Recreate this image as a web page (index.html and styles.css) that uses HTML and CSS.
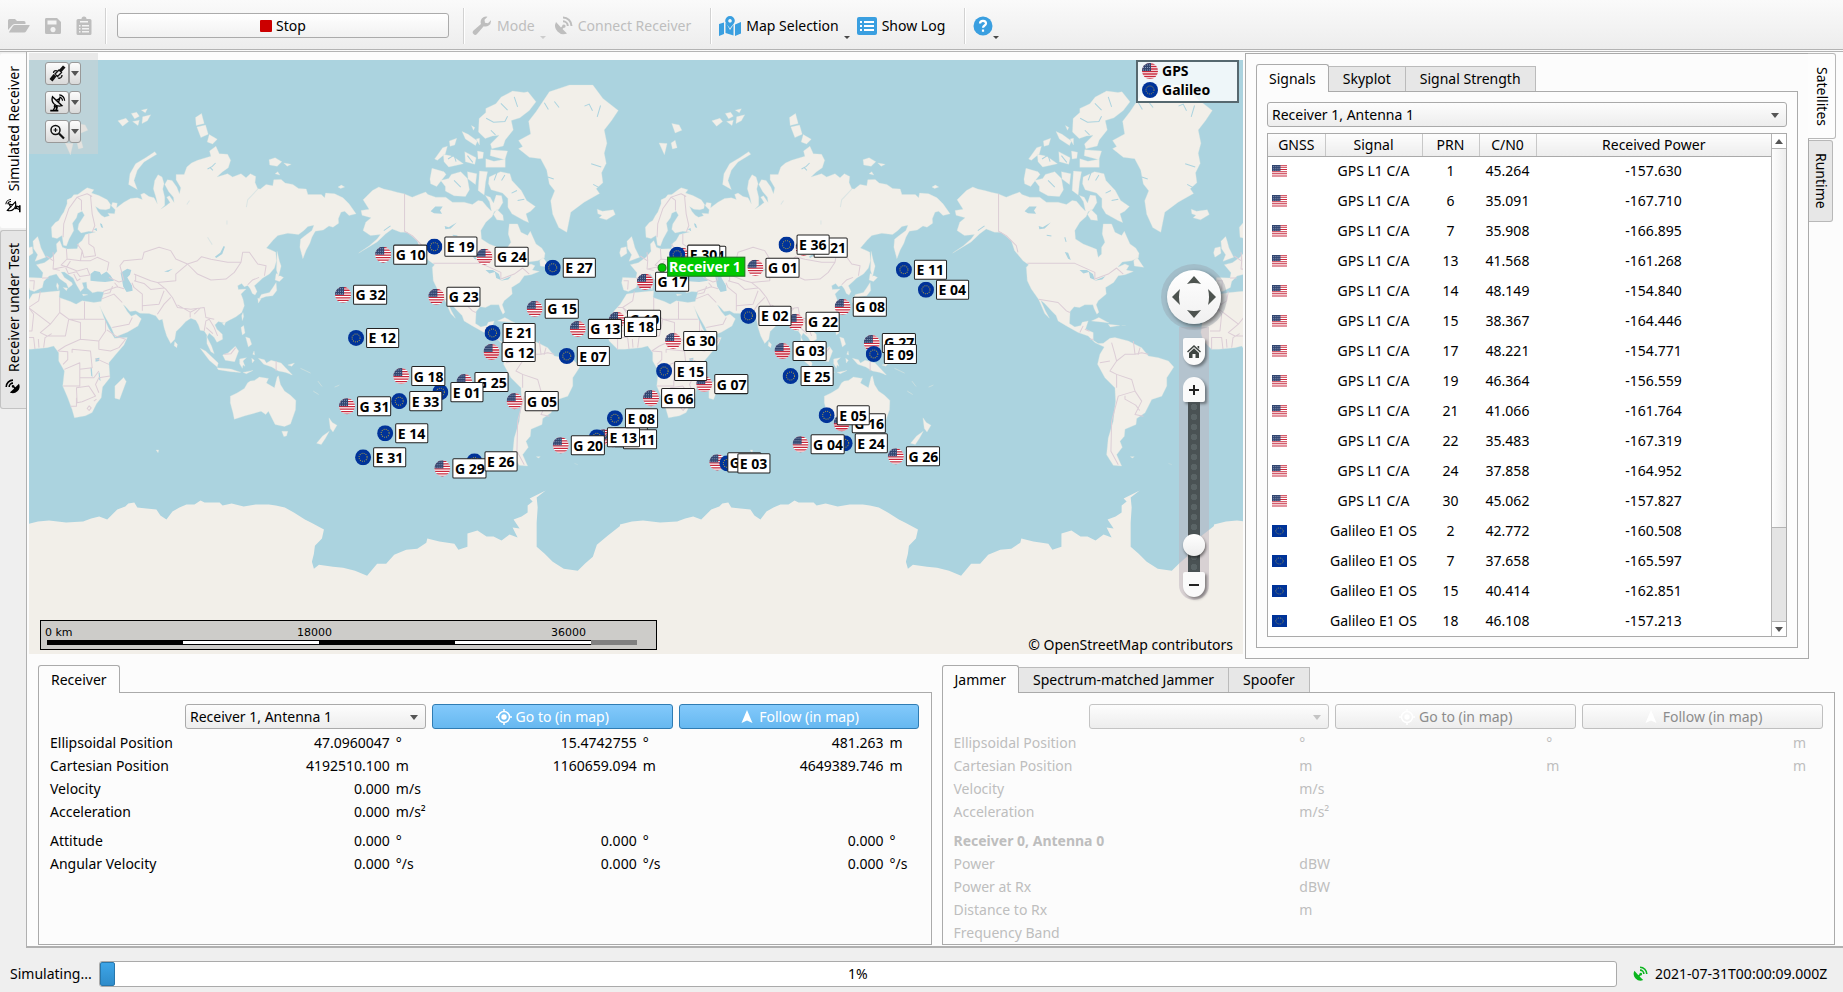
FILE: index.html
```html
<!DOCTYPE html>
<html lang="en">
<head>
<meta charset="utf-8">
<title>GNSS Simulator</title>
<link rel="stylesheet" href="styles.css">
</head>
<body>
<svg class="defs" width="0" height="0" aria-hidden="true">
  <defs>
    <symbol id="us" viewBox="0 0 16 16" preserveAspectRatio="none">
      <rect width="16" height="16" fill="#fff"/>
      <path d="M0 1h16M0 3.500h16M0 6h16M0 8.500h16M0 11h16M0 13.500h16M0 16h16" stroke="#c8283c" stroke-width="1.300"/>
      <rect width="9" height="8" fill="#31456f"/>
      <path d="M1 2h8M1 4.500h8M1 7h8" stroke="#8d9bbd" stroke-width="1" stroke-dasharray="1 1"/>
    </symbol>
    <symbol id="eu" viewBox="0 0 16 16" preserveAspectRatio="none">
      <rect width="16" height="16" fill="#039"/>
      <circle cx="8" cy="8" r="4" fill="none" stroke="#a79a45" stroke-width="1" stroke-dasharray="1 1.100"/>
    </symbol>
    <clipPath id="disc"><circle cx="8" cy="8" r="8"/></clipPath>
    <symbol id="us-disc" viewBox="0 0 16 16"><g clip-path="url(#disc)"><use href="#us" width="16" height="16"/></g></symbol>
    <symbol id="eu-disc" viewBox="0 0 16 16"><g clip-path="url(#disc)"><use href="#eu" width="16" height="16"/></g></symbol>
    <symbol id="i-dish" viewBox="0 0 20 20">
      <path d="M3 6a8.500 8.500 0 0 0 11 11.500L9.500 13l1.200-1.200a1.700 1.700 0 1 0-1.500-1.500L8 11.500z" fill="currentColor"/>
      <path d="M10 1.500a8.500 8.500 0 0 1 8.500 8.500M10 5.200a4.800 4.800 0 0 1 4.800 4.800" fill="none" stroke="currentColor" stroke-width="2"/>
    </symbol>
    <symbol id="i-antenna" viewBox="0 0 20 20">
      <path d="M5 3C3 9 8 15 15.500 13zM8.500 7.500L13 5l-1.500 5M8 13.500L6 18" fill="none" stroke="currentColor" stroke-width="1.500"/>
      <path d="M2.500 18.500h9M6.500 13l3.500 1.500-1 4" fill="none" stroke="currentColor" stroke-width="2"/>
      <path d="M12.500 1a6.500 6.500 0 0 1 6 6.500M12.500 3.500a3.800 3.800 0 0 1 3.600 4" fill="none" stroke="currentColor" stroke-width="1.300"/>
    </symbol>
    <symbol id="i-target" viewBox="0 0 16 16">
      <circle cx="8" cy="8" r="5.500" fill="none" stroke="currentColor" stroke-width="1.500"/><circle cx="8" cy="8" r="2.700" fill="currentColor"/>
      <path d="M8 0v3M8 13v3M0 8h3M13 8h3" stroke="currentColor" stroke-width="1.500"/>
    </symbol>
    <symbol id="i-arrow" viewBox="0 0 16 16"><path d="M8 1l5.500 13L8 11.500 2.500 14z" fill="currentColor"/></symbol>
  </defs>
</svg>

<header class="toolbar">
  <div class="files">
    <button class="tool off" disabled aria-label="Open"><svg width="22" height="20" viewBox="0 0 22 20"><path d="M0 14V4.500Q0 3 1.500 3H7l2 2h7q1.500 0 1.500 1.500V8H6.500Q5 8 4 9.500zM1 16l4-6q.7-1 2-1h14.200q.8 0 .4.800L18 15.500q-.6.900-1.800.900H1.400Q.7 16.400 1 16z" fill="currentColor"/></svg></button>
    <button class="tool off" disabled aria-label="Save"><svg width="18" height="20" viewBox="0 0 18 20"><path fill-rule="evenodd" d="M2 2h11l4 4v10.500q0 1.500-1.500 1.500h-13Q1 18 1 16.500v-13Q1 2 2 2zM3.500 4.500v4h9v-4zM9 11a2.600 2.600 0 1 0 .01 0z" fill="currentColor"/></svg></button>
    <button class="tool off" disabled aria-label="Clipboard"><svg width="16" height="20" viewBox="0 0 16 20"><path fill-rule="evenodd" d="M2 3h3.500a2.500 2.500 0 0 1 5 0H14q1.500 0 1.500 1.500v13Q15.500 19 14 19H2Q.5 19 .5 17.500v-13Q.5 3 2 3zM4 5v1.500h8V5zM6 9v1.400h7V9zM6 12v1.400h7V12zM6 15v1.400h7V15zM3 9v1.400h1.500V9zM3 12v1.400h1.500V12zM3 15v1.400h1.500V15z" fill="currentColor"/></svg></button>
  </div>
  <span class="sep"></span>
  <button class="stop"><span class="stop-mark"></span>Stop</button>
  <span class="sep"></span>
  <button class="tool menu off" disabled><svg width="20" height="20" viewBox="0 0 20 20"><path d="M19 5a5.500 5.500 0 0 1-7.300 5.200L5 18a2.400 2.400 0 0 1-3.500-3.500L9 8A5.500 5.500 0 0 1 15.500.7L12.500 3.700l.5 3 3 .5 2.900-2.900z" fill="currentColor"/></svg>Mode<span class="drop"></span></button>
  <button class="tool off" disabled><svg width="20" height="20"><use href="#i-dish"/></svg>Connect Receiver</button>
  <span class="sep"></span>
  <button class="tool menu"><svg class="blue" width="22" height="20" viewBox="0 0 22 20"><path d="M0 8l5-1.500V18L0 20zM6.500 7l.8.300L11 14l3.500-5.500v11L6.500 17zM16 8.500L22 6v11.500L16 20z" fill="currentColor"/><path fill-rule="evenodd" d="M11 0a4.800 4.800 0 0 1 4.800 4.800C15.800 7.500 12.500 10 11 12.500 9.500 10 6.200 7.500 6.200 4.800A4.800 4.800 0 0 1 11 0zM11 3a1.800 1.800 0 1 0 .01 0z" fill="currentColor"/></svg>Map Selection<span class="drop"></span></button>
  <button class="tool"><svg class="blue" width="20" height="20" viewBox="0 0 20 20"><rect y="1" width="20" height="18" rx="2" fill="currentColor"/><path d="M7 6h10M7 10h10M7 14h10M3 6h2M3 10h2M3 14h2" stroke="#fff" stroke-width="1.800"/></svg>Show Log</button>
  <span class="sep"></span>
  <button class="tool help" aria-label="Help"><svg class="blue" width="20" height="20" viewBox="0 0 20 20"><circle cx="10" cy="10" r="9.500" fill="currentColor"/><path d="M7 7.500C7.200 3.800 13 4.200 13 7.500c0 2-3 2-3 4.200M10 13.500v2.200" fill="none" stroke="#fff" stroke-width="2.200"/></svg><span class="drop"></span></button>
</header>

<main class="workspace">
  <nav class="side-tabs" role="tablist" aria-label="Receivers">
    <button class="side-tab active" role="tab" aria-selected="true"><svg width="16" height="16"><use href="#i-antenna"/></svg>Simulated Receiver</button>
    <button class="side-tab" role="tab" aria-selected="false"><svg width="16" height="16"><use href="#i-dish"/></svg>Receiver under Test</button>
  </nav>

  <div class="page">
    <div class="upper">
      <section class="map" aria-label="World map">
        <svg class="map-canvas" viewBox="0 0 1214 592" preserveAspectRatio="xMidYMid slice">
          <defs>
            <g id="world">
              <g transform="translate(0 20) scale(.33333)">
                <path class="land" d="M75 470L73 440 85 426 95 420 103 405 110 395 120 370 120 358 133 352 140 343 152 342 168 330 180 322 190 325 200 328 193 338 215 345 240 358 250 372 248 384 236 388 218 386 205 378 212 392 222 404 232 410 247 406 242 398 262 400 264 388 252 376 256 366 270 368 268 382 290 365 310 354 330 352 345 357 340 342 350 338 365 348 380 352 390 370 386 352 378 325 382 300 392 283 404 290 410 310 406 326 412 350 412 374 400 386 418 374 428 366 418 350 426 346 440 366 438 350 424 334 412 312 420 298 434 300 448 320 456 340 460 322 446 298 446 282 470 282 478 260 492 248 510 240 525 235 550 228 546 212 565 198 575 220 600 222 609 240 602 262 584 275 568 290 600 280 615 290 640 280 655 292 668 280 684 288 682 306 690 325 698 326 715 312 735 316 738 298 760 297 772 308 795 312 812 324 835 326 840 342 880 342 890 352 893 338 920 340 945 352 963 370 984 400 963 405 950 392 939 395 931 415 932 428 915 440 903 436 886 448 862 452 852 470 846 488 835 508 825 534 816 500 818 476 832 465 852 450 858 434 840 438 828 450 812 462 780 458 750 465 735 480 716 502 735 510 744 515 746 540 740 562 725 580 705 592 694 602 680 615 688 632 682 643 674 638 668 625 660 614 650 618 642 608 630 615 632 626 655 625 640 640 646 655 650 675 642 695 625 708 605 718 590 726 572 722 562 732 568 745 584 760 585 775 568 784 560 770 545 756 538 768 552 795 560 818 550 812 538 788 538 762 530 750 518 748 513 732 505 718 490 712 475 722 460 738 446 752 442 775 430 788 418 765 410 740 405 715 395 718 385 705 365 698 338 697 325 690 308 692 294 676 288 672 300 692 312 706 326 700 342 714 332 735 300 754 264 768 252 740 236 712 220 682 218 676 232 715 244 742 262 772 300 770 290 792 266 820 245 845 248 890 226 918 222 950 208 968 195 994 175 1004 142 1010 135 985 122 950 107 915 112 870 95 840 95 815 80 795 60 800 10 805-10 805-35 780-42 755-38 725-20 690-2 670 17 640 45 635 98 630 96 650 130 662 147 670 165 660 200 665 222 662 230 634 212 632 196 636 180 622 178 604 165 606 170 622 160 632 148 612 138 592 112 574 102 574 112 590 135 606 136 612 124 622 118 608 98 594 88 580 66 586 50 602 46 620 22 632 8 628 2 606 5 590 45 592 48 576 28 552 52 546 75 530 90 512 88 490 98 480 106 500 120 505 150 504 155 488 165 480 175 462 205 454 185 452 162 457 152 446 155 430 172 404 165 392 152 398 148 412 136 428 140 450 126 475 118 496 109 494 105 465 90 474z
                M330 327L304 312 308 280 325 250 355 232 382 214 388 222 350 245 330 270 320 300z
                M152 130l22 4 8 16-20 8zM114 188l24 2-8 33zM150 188l12-8 6 22-14 4z
                M272 122l24-8 8 10-18 14zM312 100l16-4 8 12-14 8zM342 90l18-4-6 12zM346 110l24-6-10 18-16 8zM316 124l20-4-4 16z
                M504 112l18-12 8 30-24 6zM508 140l26-6 8 28-22 10zM545 163l24 14-14 14-16-6z
                M724 238l18-6 20 12-14 14-22-4zM768 248l22 4-12 6zM742 280l8-6 6 10zM930 320l10-6 10 6-12 4z
                M748 512l7 30 5 14-8 32-6-20zM745 578l22 12-12 12-13-4zM745 605l2 24-12 16-20 2-22 8 8-14 24-6 10-14zM690 652l10 2-8 13z
                M18 482l14-14 4 12 6 22 14 28-32 12 8-20-12-18zM0 502l16-4 2 20-18 12-4-14zM90 606l5 8-2 14-5-12zM108 620l14 2-4 8zM166 640l16 2-14 3z
                M642 705l4-10 2 12-4 12zM640 740l8-6 4 22-8 6zM654 768l12 4 6 18-10 8zM442 782l8 8-2 10-8-6zM584 728l10-4-4 10z
                M518 802l16 8 38 36-3 12-24-20zM568 860l42 4 30 10-30-2-38-6zM646 874l30-6-20 10z
                M585 822l16-6 22-20 10 14-12 32-28-4zM636 834l20-4-10 10 6 16-6-4-2 10-8-14zM672 832l8 6-6 8zM675 820l4-10 2 12z
                M692 832l18 4 6 10 14-8 30 8 34 36-20-8-22-4-20-12-24-8zM780 852l20-6-8 10zM818 862l30 14zM870 900l12 16zM856 930l16 10zM920 918l14-6z
                M608 945L628 936 650 922 660 905 668 900 680 898 695 888 722 892 716 906 740 920 748 888 752 884 758 910 770 930 788 942 804 958 803 986 788 1028 770 1036 742 1030 728 1002 722 990 714 1000 700 990 680 996 652 1004 620 1014 616 995 608 965z
                M762 1050l18 0-4 14-8 2zM903 1010l10 14 14 8-12 20-8-10zM904 1050l-12 22-12 18-14-4 18-22zM263 915l26-26 8 12-20 54-14-4zM386 1106l8 0-2 8z"/>
                <path class="water" d="M190 600v-20l12-10 16 4 4 8 16-10 12 12 10 16-26 4-22-2zM280 576l20-12 12 4-4 14-8 8 14 24 2 16-18 4-10-16zM562 528l16-12 10-20 4 2-8 22-18 12zM410 572l26-8-14 10zM205 832l12-2-2 10-10 2zM190 860l4 0 2 28-4-4zM214 874l3 0 3 26-4-4zM200 446l8-4 2 10zM218 428l6 2 4 12-6-2z"/>
                <path class="river" d="M690 326l-30 32-4 22M540 470l14 22M598 420v12M486 360l-8 12"/>
                <path class="water-line" d="M540 266l14-8 10-10M548 262l8 8"/>
                <path class="border" d="M108 470l2-40 15-45 25-35 30-10 15 8M163 390v-30l-13-10M190 345l5 55 8 35-8 20M185 460v30l15 10 5 25-35 5-5-20-15-20M118 505l2 30 40 5 5-30M160 540l30 0 20-10 35 15-5 25M78 515l2 25-2 25 20 4M78 540l-20-14M80 565l40-8 10-16M120 535l-18 18 24 8 24 10 30-8 8 20-30 4-10-14-24 6-8-18M140 580l10 20 10-6M8 600l14 0-2 26M45 592l20 0M228 632l42-14 20 6M245 590l30 14 12-4M262 606l10 12M290 600l-12-45 12-15 55-5 5-20 45-15 35 10 15 25 35 15-35 30v20l-55 5-20-5-50-20M325 580l0 20M480 550l30-10 12-12 28 8 50 9 40 0-20 30-25 20-45 3-40-18zM640 545l5-30 20 0 25 35 25 5-5 30M390 605l25 20 20 25 15 30 40 5 40-5 5 30 25 5M390 700l20-30 20-20M345 690v-50l-25-20-6-14M345 675l50-5 15-40M320 600l30 8 20 18 40-4M222 655l38-15 25 25M228 640l20-4 8-20M450 672l38 22 20-10M488 692l0 18M255 740l50-10 10-20M660 612l14-14 20-8
                M98 650v45l27 20h47v-53M172 715h58M5 680l65 50 28-35M40 632l-5 28-30 20H-10M5 680l15 20-5 50-30 0M70 730l-30 25 20 10 55 0 10-50M125 715l35 10v50l-45 20-23 15M160 775l55 5 20-30 0-30M215 780v25l35 5 25-10 20-25-30-10-26-18M135 815v-10l55 5 5 50-37 5v-20l-46 20M158 865v50H108M158 890h42l15-20M150 965l-2-45 37-5 20 30-40 17zM130 975h18v-25M248 885l-33 5-10 20 10 25M245 850l-40-18M-10 805V770l30 0 4 34M36 800l-2-26M50 800l4-30 20-12M92 810l30 2 0 24-14 14M180 982l6-8 6 6-6 8zM200 960l8-6M530 750l5-30 10-5 15 25 10 25M536 740l20 18M500 700l20-20M590 820l20-2 14-18M745 840v30"/>
              </g>
              <g transform="translate(329 20) scale(.33333)">
                <path class="land" d="M18 358L30 346 46 330 65 320 80 326 100 330 122 336 140 340 165 350 185 342 205 335 212 342 235 350 265 350 285 365 320 365 345 372 362 360 375 362 388 378 402 392 396 364 384 345 398 350 408 368 416 344 432 346 436 366 424 386 410 394 404 408 385 425 370 450 372 475 395 490 420 500 435 506 440 530 450 520 450 500 460 485 452 460 455 430 480 430 490 455 510 465 518 452 535 490 552 502 562 518 560 532 540 540 512 544 498 560 520 550 532 555 524 568 545 572 520 582 500 585 486 605 462 620 464 640 440 660 434 672 442 694 436 700 428 684 424 672 400 672 384 680 368 678 356 692 354 728 370 738 388 734 392 724 410 720 402 745 425 755 425 778 440 788 455 787 475 772 490 770 530 780 570 800 590 825 620 830 650 840 666 858 645 890 645 915 630 945 600 955 580 995 555 1012 553 1030 520 1044 518 1065 505 1080 512 1098 495 1120 510 1154 485 1152 465 1120 470 1070 485 1020 492 960 490 920 460 890 438 850 445 820 458 798 430 785 410 765 380 755 345 735 320 720 314 704 300 690 280 668 268 658 282 690 294 712 280 698 262 656 240 625 228 600 225 560 232 552 215 540 190 510 180 480 150 455 130 455 105 445 85 460 60 484 30 502 5 517 36 496 60 475 70 462 40 465 18 450 26 425 42 412 15 404 12 390 36 386z
                M535 95l40-60 60-20 70 0 30 40 46 36-20 30-22 28 8 40-8 30 6 30-14 28 4 30-20 18 10 14-46 26-40 30-12 60-24-14-18-40-6-40 12-30-16-20-8-42-18-34-34-4-32-26 12-6-12-18 36-20-6-38z
                M385 85l30-14 16-20 34-18 34 4 12-2 24 30-20 26-28 22-26 8 6 28-24 30-6 18-34 8-4-14 26-26-20 2-22 8-20-20 2-40 20-18z
                M395 290l34-16 28 6 6 20 28 30 16 30 26 18-14 14-14 8 8 26-14-6-36-20-12-20 0-26-16-16-34-10-8-18z
                M250 300l24-6 8-12 28-8 20 20 6 34-12 20-34-2-26-14 0-14zM218 296l6-32 36 10 6 8-28 36-18-8z
                M385 235l24 8 34-6 0 24-58 0zM400 208l50 4-8 26-44-12zM322 214l34 18-4 20-28-8zM258 222l28 6 32 22-44 10-14-16zM232 236l24-34 14-4-6 22-24 20zM314 154l18 8 28 20-6 14-30-20zM330 274l28 6-4 32-22-16zM366 272l24 2-6 32-4 38-18-14zM276 182l22-8-6 20-14 4zM360 212l18 4-2 18-14 2zM342 136l10 6-4 8zM356 176l10-2 0 20z
                M408 402l10-16 18 18 2 16-20-2zM546 540l10-10 20 30-28-4zM718 386l16 6 32-4 6 14-26 16-22-6 8-8-12-4zM420 720l22-10 30 16-16-2zM470 730l34 4-28 4zM510 734h12
                M536 1126l12 0-6 4zM650 1146l10 4"/>
                <path class="water" d="M220 392l14-14 22 0-8 12 6 10-24-2zM262 436l12 4 24-14-18 18-16 2zM384 568l22 0 18 12 6 18-14-6-4-18-16 4zM428 600l34-14-10 10zM340 514l10 2 8 22-8-4z"/>
                <path class="water-line" d="M386 114l22 12 34-2 8-16M430 70l20 20M470 50l10 30M400 150l14 14M680 78l14-6 10 20M718 110l10-34M560 68l12 20M590 64l14 18M700 250l30 10M706 312l26 14M570 290l18 6M272 236l18-12 6 20M290 300l20 20M410 300l8-22M432 300l10-16M478 330l-16 8M500 356l-20 4M330 226l16 20M100 436l-20 14M300 466l-14-2M340 470l4 14"/>
                <path class="border" d="M142 340v112l23 13 30 30 5 20M228 548h142l60 27v20l40-15 25-18 20 18M262 655l58 10 25 25 10 5M385 755l10-20M400 745l14 6M415 775l10 0M495 920v-40l-20-10 20-30-5-20-10-35M495 840l25-20h30l20-5 20 5M445 845l30-5M495 880l45 15 10 35-50 15-20 75-2 90 22 40M550 930l20 30-20 40 25 5M545 780l5 40M565 800l-6 22M520 944l0 10 32 18 12 16"/>
              </g>
              <path class="ice" transform="translate(-29 -60)" d="M28 523L40 520 51 519 68 521 85 520 93 517 101 515 109 518 119 508 127 505 130 502 136 501 139 506 148 507 158 508 162 514 168 518 174 510 181 506 188 503 196 503 202 499 206 501 221 501 224 504 233 502 245 505 257 503 270 503 277 504 286 506 295 511 306 518 312 521 325 528 323 537 316 544 315 552 313 560 315 567 320 563 334 565 344 566 356 569 368 574 373 568 378 562 387 562 395 553 407 548 418 547 427 541 428 537 440 540 455 542 459 548 468 545 468 532 478 529 487 535 494 535 502 539 510 533 518 536 513 526 520 527 514 518 522 515 528 511 528 504 533 500 530 497 546 489 537 496 538 506 537 521 537 545 545 552 553 560 564 567 578 569 585 562 593 555 597 543 608 534 622 523V660H28z"/>
            </g>
          </defs>
          <rect class="sea" width="1214" height="592"/>
          <use href="#world" x="-592"/><use href="#world"/><use href="#world" x="592"/><use href="#world" x="1184"/>
          <g id="markers"></g>
        </svg>

        <div class="map-tools">
          <div class="split"><button aria-label="Satellites"><svg width="18" height="18" viewBox="0 0 18 18"><path d="M1.500 14l4-5 3 2.500-4 5zM11 5l4-4.500 2.500 2L13.500 7z" fill="#111"/><path d="M7 9l4-4 2.500 2.500-4 4zM10 13c2.500 1 4-1 4-3M5.500 8c0-2 2-3 4-2" fill="none" stroke="#111" stroke-width="1.300"/></svg></button><button aria-label="Satellite options"><span class="caret"></span></button></div>
          <div class="split"><button aria-label="Antenna"><svg width="18" height="18"><use href="#i-antenna"/></svg></button><button aria-label="Antenna options"><span class="caret"></span></button></div>
          <div class="split"><button aria-label="Zoom"><svg width="18" height="18" viewBox="0 0 18 18"><circle cx="7.500" cy="7" r="4.500" fill="none" stroke="#111" stroke-width="1.500"/><path d="M11 10.500l5 5" stroke="#111" stroke-width="2.200"/><path d="M7.500 5v4M5.500 7h4" stroke="#111" stroke-width="1.200"/></svg></button><button aria-label="Zoom options"><span class="caret"></span></button></div>
        </div>

        <div class="legend">
          <div><svg width="16" height="16"><use href="#us-disc"/></svg>GPS</div>
          <div><svg width="16" height="16"><use href="#eu-disc"/></svg>Galileo</div>
        </div>

        <div class="navigator">
          <button class="pan" aria-label="Pan"><svg width="54" height="54" viewBox="0 0 54 54"><path d="M27 6l7 8q-7-2-14 0zM27 48l7-8q-7 2-14 0zM5 27l8-8q-2 8 0 16zM49 27l-8-8q2 8 0 16z" fill="#4d534f"/></svg></button>
          <div class="zoomer">
            <button class="home" aria-label="Home"><svg width="14" height="13" viewBox="0 0 14 13"><path d="M7 0l7 6.500-1 1L7 2 1 7.500l-1-1zM10.500 1h1.700v3l-1.700-1.600zM7 3.300L12 8v5H8.500V9h-3v4H2V8z" fill="#3f4542"/></svg></button>
            <button class="plus" aria-label="Zoom in"><svg width="12" height="12" viewBox="0 0 12 12"><path d="M6 1v10M1 6h10" stroke="#222" stroke-width="2"/></svg></button>
            <input class="zoom" type="range" min="0" max="100" value="11" aria-label="Zoom level">
            <button class="minus" aria-label="Zoom out"><svg width="12" height="12" viewBox="0 0 12 12"><path d="M1 6h10" stroke="#222" stroke-width="2"/></svg></button>
          </div>
        </div>

        <div class="scale">
          <div class="scale-text"><span>0 km</span><span>18000</span><span>36000</span></div>
          <div class="scale-bar"><i></i><i></i><i></i><i></i><i></i></div>
        </div>
        <p class="credit">© OpenStreetMap contributors</p>
      </section>

      <section class="info">
        <div class="info-pane">
          <div class="tabs" role="tablist">
            <button class="tab active" role="tab" aria-selected="true">Signals</button><button class="tab" role="tab">Skyplot</button><button class="tab" role="tab">Signal Strength</button>
          </div>
          <div class="pane signals">
            <div class="combo"><select aria-label="Receiver antenna"><option>Receiver 1, Antenna 1</option></select></div>
            <div class="list">
              <table>
                <colgroup><col class="c-gnss"><col class="c-signal"><col class="c-num"><col class="c-num"><col></colgroup>
                <thead><tr><th>GNSS</th><th>Signal</th><th>PRN</th><th>C/N0</th><th>Received Power</th></tr></thead>
                <tbody>
                  <tr><td><svg><use href="#us"/></svg></td><td>GPS L1 C/A</td><td>1</td><td>45.264</td><td>-157.630</td></tr>
                  <tr><td><svg><use href="#us"/></svg></td><td>GPS L1 C/A</td><td>6</td><td>35.091</td><td>-167.710</td></tr>
                  <tr><td><svg><use href="#us"/></svg></td><td>GPS L1 C/A</td><td>7</td><td>35.908</td><td>-166.895</td></tr>
                  <tr><td><svg><use href="#us"/></svg></td><td>GPS L1 C/A</td><td>13</td><td>41.568</td><td>-161.268</td></tr>
                  <tr><td><svg><use href="#us"/></svg></td><td>GPS L1 C/A</td><td>14</td><td>48.149</td><td>-154.840</td></tr>
                  <tr><td><svg><use href="#us"/></svg></td><td>GPS L1 C/A</td><td>15</td><td>38.367</td><td>-164.446</td></tr>
                  <tr><td><svg><use href="#us"/></svg></td><td>GPS L1 C/A</td><td>17</td><td>48.221</td><td>-154.771</td></tr>
                  <tr><td><svg><use href="#us"/></svg></td><td>GPS L1 C/A</td><td>19</td><td>46.364</td><td>-156.559</td></tr>
                  <tr><td><svg><use href="#us"/></svg></td><td>GPS L1 C/A</td><td>21</td><td>41.066</td><td>-161.764</td></tr>
                  <tr><td><svg><use href="#us"/></svg></td><td>GPS L1 C/A</td><td>22</td><td>35.483</td><td>-167.319</td></tr>
                  <tr><td><svg><use href="#us"/></svg></td><td>GPS L1 C/A</td><td>24</td><td>37.858</td><td>-164.952</td></tr>
                  <tr><td><svg><use href="#us"/></svg></td><td>GPS L1 C/A</td><td>30</td><td>45.062</td><td>-157.827</td></tr>
                  <tr><td><svg><use href="#eu"/></svg></td><td>Galileo E1 OS</td><td>2</td><td>42.772</td><td>-160.508</td></tr>
                  <tr><td><svg><use href="#eu"/></svg></td><td>Galileo E1 OS</td><td>7</td><td>37.658</td><td>-165.597</td></tr>
                  <tr><td><svg><use href="#eu"/></svg></td><td>Galileo E1 OS</td><td>15</td><td>40.414</td><td>-162.851</td></tr>
                  <tr><td><svg><use href="#eu"/></svg></td><td>Galileo E1 OS</td><td>18</td><td>46.108</td><td>-157.213</td></tr>
                </tbody>
              </table>
              <div class="scroll"><button aria-label="Scroll up"><span class="caret up"></span></button><div class="thumb"></div><div class="trough"></div><button aria-label="Scroll down"><span class="caret"></span></button></div>
            </div>
          </div>
        </div>
        <nav class="right-tabs" role="tablist" aria-label="Views"><button class="right-tab active" role="tab">Satellites</button><button class="right-tab" role="tab">Runtime</button></nav>
      </section>
    </div>

    <div class="lower">
      <section class="widget">
        <div class="tabs" role="tablist"><button class="tab active" role="tab">Receiver</button></div>
        <div class="pane readout">
          <div class="row controls"><span></span>
            <div class="combo"><select aria-label="Receiver"><option>Receiver 1, Antenna 1</option></select></div>
            <button class="btn primary"><svg width="16" height="16"><use href="#i-target"/></svg>Go to (in map)</button>
            <button class="btn primary"><svg width="16" height="16"><use href="#i-arrow"/></svg>Follow (in map)</button></div>
          <div class="row"><span>Ellipsoidal Position</span><p><b>47.0960047</b><i>°</i></p><p><b>15.4742755</b><i>°</i></p><p><b>481.263</b><i>m</i></p></div>
          <div class="row"><span>Cartesian Position</span><p><b>4192510.100</b><i>m</i></p><p><b>1160659.094</b><i>m</i></p><p><b>4649389.746</b><i>m</i></p></div>
          <div class="row"><span>Velocity</span><p><b>0.000</b><i>m/s</i></p></div>
          <div class="row"><span>Acceleration</span><p><b>0.000</b><i>m/s²</i></p></div>
          <div class="row spaced"><span>Attitude</span><p><b>0.000</b><i>°</i></p><p><b>0.000</b><i>°</i></p><p><b>0.000</b><i>°</i></p></div>
          <div class="row"><span>Angular Velocity</span><p><b>0.000</b><i>°/s</i></p><p><b>0.000</b><i>°/s</i></p><p><b>0.000</b><i>°/s</i></p></div>
        </div>
      </section>
      <section class="widget">
        <div class="tabs" role="tablist"><button class="tab active" role="tab">Jammer</button><button class="tab" role="tab">Spectrum-matched Jammer</button><button class="tab" role="tab">Spoofer</button></div>
        <div class="pane readout muted">
          <div class="row controls"><span></span>
            <div class="combo"><select disabled aria-label="Jammer"><option></option></select></div>
            <button class="btn" disabled><svg width="16" height="16"><use href="#i-target"/></svg>Go to (in map)</button>
            <button class="btn" disabled><svg width="16" height="16"><use href="#i-arrow"/></svg>Follow (in map)</button></div>
          <div class="row"><span>Ellipsoidal Position</span><p><b></b><i>°</i></p><p><b></b><i>°</i></p><p><b></b><i>m</i></p></div>
          <div class="row"><span>Cartesian Position</span><p><b></b><i>m</i></p><p><b></b><i>m</i></p><p><b></b><i>m</i></p></div>
          <div class="row"><span>Velocity</span><p><b></b><i>m/s</i></p></div>
          <div class="row"><span>Acceleration</span><p><b></b><i>m/s²</i></p></div>
          <div class="row spaced"><strong>Receiver 0, Antenna 0</strong></div>
          <div class="row"><span>Power</span><p><b></b><i>dBW</i></p></div>
          <div class="row"><span>Power at Rx</span><p><b></b><i>dBW</i></p></div>
          <div class="row"><span>Distance to Rx</span><p><b></b><i>m</i></p></div>
          <div class="row"><span>Frequency Band</span></div>
        </div>
      </section>
    </div>
  </div>
</main>

<footer class="status">
  <span>Simulating...</span>
  <div class="progress" role="progressbar" aria-valuenow="1" aria-valuemin="0" aria-valuemax="100" aria-label="Simulation progress"><div class="chunk" style="width:1%"></div><span>1%</span></div>
  <svg class="linked" width="16" height="16"><use href="#i-dish"/></svg>
  <time datetime="2021-07-31T00:00:09.000Z">2021-07-31T00:00:09.000Z</time>
</footer>
<script src="markers.js"></script>
</body>
</html>
```

FILE: styles.css
```css
:root {
  --line: #b0b0b0;
  --panel: #fcfcfc;
  --face: linear-gradient(#fdfdfd, #ededed);
}
* { box-sizing: border-box; }
body {
  margin: 0;
  min-height: 100vh;
  display: flex;
  flex-direction: column;
  background: #efefef;
  color: #000;
  font: 14px/20px "Noto Sans", "Open Sans", sans-serif;
}
button, select { font: inherit; color: inherit; margin: 0; padding: 0; border: 0; background: none; }
p { margin: 0; }
svg { flex: none; display: block; }
.defs { position: absolute; }

/* toolbar */
.toolbar {
  height: 52px;
  display: flex;
  align-items: center;
  padding: 2px 8px 0;
  background: linear-gradient(#fafafa, #ededed);
  border-bottom: 3px double #b3b3b3;
}
.files { display: flex; gap: 14px; margin-right: 4px; }
.tool { display: flex; align-items: center; gap: 5px; height: 30px; margin-right: 10px; white-space: nowrap; }
.files .tool { margin-right: 0; }
.tool.menu { margin-right: 7px; }
.tool.help { gap: 0; }
.tool.off { color: #bebebe; }
.blue { color: #3a9fe0; }
.sep { width: 2px; height: 36px; border-left: 1px solid #d2d2d2; background: #fff; margin: 0 7px 0 9px; }
.stop {
  width: 332px; height: 25px; margin: 0 5px 0 3px;
  display: flex; align-items: center; justify-content: center; gap: 4px;
  border: 1px solid #ababab; border-radius: 3px; background: linear-gradient(#fff, #f1f1f1);
}
.stop-mark { width: 12px; height: 12px; background: #c00; border-radius: 1px; }
.drop { align-self: flex-end; border: 3px solid transparent; border-top-color: currentColor; border-bottom: 0; opacity: .7; margin-bottom: 2px; }

/* workspace frame */
.workspace { flex: 1; display: grid; grid-template-columns: 26px 1fr; }
.side-tabs { display: flex; flex-direction: column; gap: 2px; padding-top: 1px; }
.side-tab {
  writing-mode: vertical-rl; transform: rotate(180deg);
  display: flex; align-items: center; justify-content: flex-start; gap: 7px;
  width: 26px; padding: 13px 0 12px; border: 1px solid #c2c2c2; border-left: 0; border-radius: 0 3px 3px 0; background: #e6e6e6;
}
.side-tab svg { transform: rotate(90deg); }
.side-tab.active { background: var(--panel); border-color: transparent; }
.page { display: flex; flex-direction: column; background: var(--panel); border: 1px solid var(--line); border-width: 0 0 2px 1px; min-width: 0; }
.upper { flex: 1; display: grid; grid-template-columns: minmax(0, 1fr) 598px; padding: 1px 0 6px 2px; }

/* map */
.map { position: relative; margin: 7px 2px 5px 0; min-height: 592px; }
.map-canvas { position: absolute; width: 100%; height: 100%; }
.sea, .water { fill: #abd3df; }
.land { fill: #f2efe9; stroke: #dfe6e2; stroke-width: 1; }
.ice { fill: #f2efe9; }
.border { fill: none; stroke: #dccdd6; stroke-width: 3; stroke-linejoin: round; }
.river, .water-line { fill: none; stroke: #abd3df; stroke-width: 3; }
.river { stroke: #dbe5e4; }
.tag { fill: #fff; stroke: #222; stroke-width: 1; }
.tag-text { font: bold 14px "Noto Sans", sans-serif; }
.rx { fill: #00c800; stroke: #1f6f1f; stroke-width: 1; }
.rx-text { font: bold 14px "Noto Sans", sans-serif; fill: #fff; }

.map-tools { position: absolute; left: 0; top: -7px; width: 69px; padding: 9px 0 11px 16px; display: flex; flex-direction: column; gap: 6px; background: rgba(210, 210, 210, .45); }
.split { display: flex; }
.split button { height: 23px; border: 1px solid #999; border-radius: 3px; background: linear-gradient(#fcfcfc, #d9d9d9); display: grid; place-items: center; width: 24px; }
.split button + button { width: 12px; }
.caret { border: 4px solid transparent; border-top: 5px solid #555; border-bottom: 0; }
.caret.up { border-top: 0; border-bottom: 5px solid #555; }

.legend { position: absolute; right: 4px; top: 0; width: 103px; padding: 0 4px 1px; border: 2px solid #56686f; background: rgba(255, 255, 255, .8); font-weight: bold; line-height: 18px; }
.legend div { display: flex; align-items: center; gap: 4px; height: 18px; }
.legend div + div { height: 20px; }

.navigator { position: absolute; right: 16px; top: 204px; width: 66px; display: flex; flex-direction: column; align-items: center; }
.pan { width: 66px; height: 66px; border-radius: 50%; background: rgba(150, 160, 170, .4); display: grid; place-items: center; z-index: 1; }
.pan svg { border-radius: 50%; background: linear-gradient(#fff, #f0f0f0); box-shadow: 2px 2px 4px rgba(0, 0, 0, .5); }
.zoomer { width: 30px; margin-top: -3px; padding: 11px 4px 3px; border-radius: 0 0 15px 15px; background: rgba(190, 180, 190, .5); }
.zoomer button { width: 22px; height: 27px; display: grid; place-items: center; background: #fafafa; box-shadow: 2px 2px 3px rgba(0, 0, 0, .4); }
.home { border-radius: 2px 2px 11px 11px; margin-bottom: 12px; }
.plus { border-radius: 11px 11px 2px 2px; }
.minus { border-radius: 2px 2px 11px 11px; }
.zoomer .plus, .zoomer .minus { height: 25px; }
.zoom { appearance: none; display: block; writing-mode: vertical-lr; direction: rtl; width: 22px; height: 170px; margin: 0; background: radial-gradient(circle 3px, #5a6466 3px, transparent 3px) 0 0 / 22px 10px, linear-gradient(90deg, transparent 5px, #4a5254 5px 17px, transparent 17px); }
.zoom::-webkit-slider-thumb { appearance: none; width: 22px; height: 22px; border-radius: 50%; background: linear-gradient(#fff, #ededed); box-shadow: 1px 2px 3px rgba(0, 0, 0, .5); }

.scale { position: absolute; left: 11px; bottom: 4px; width: 617px; height: 30px; border: 1px solid #000; background: #cdccc9; padding: 5px 17px 0 6px; font: 11px/14px "DejaVu Sans", sans-serif; }
.scale-text { display: grid; grid-template-columns: 252px 34px 220px 34px; margin-left: -2px; }
.scale-text span:nth-child(3) { grid-column: 4; }
.scale-bar { display: flex; height: 5px; }
.scale-bar i { width: 136px; background: #000; }
.scale-bar i:nth-child(even) { background: #fff; border: 1px solid #000; border-width: 1px 0; }
.scale-bar i:last-child { width: 46px; background: #808080; }
.credit { position: absolute; right: 10px; bottom: -1px; }

/* tabs */
.tabs { display: flex; align-items: flex-end; height: 27px; }
.tab { height: 25px; padding: 0 14px; border: 1px solid #bbb; border-width: 1px 1px 0 0; background: #e7e7e7; white-space: nowrap; }
.tab.active { height: 28px; padding: 0 12px; margin-bottom: -1px; border-width: 1px 1px 0; border-radius: 3px 3px 0 0; background: var(--panel); border-color: #aaa; position: relative; }
.pane { border: 1px solid #aaa; }

/* signal panel */
.info { display: grid; grid-template-columns: 564px 1fr; }
.info-pane { border: 1px solid #aaa; padding: 10px; display: flex; flex-direction: column; }
.signals { flex: 1; padding: 10px; display: flex; flex-direction: column; gap: 6px; }
.combo { position: relative; height: 25px; border: 1px solid #aaa; border-radius: 3px; background: var(--face); }
.combo select { appearance: none; display: block; width: 100%; height: 100%; padding: 0 24px 0 4px; outline: 0; }
.combo::after { content: ""; position: absolute; right: 7px; top: 10px; border: 4px solid transparent; border-top: 5px solid #555; border-bottom: 0; pointer-events: none; }
.list { flex: 1; display: flex; border: 1px solid #aaa; background: #fff; overflow: hidden; }
table { flex: 1; align-self: flex-start; table-layout: fixed; border-collapse: collapse; text-align: center; }
.c-gnss, .c-num { width: 57px; }
.c-signal { width: 97px; }
th { font-weight: normal; height: 22px; padding: 0; border-right: 1px solid #c8c8c8; border-bottom: 1px solid #aaa; background: var(--face); line-height: 21px; }
th:last-child { border-right: 0; }
td { height: 30px; padding: 0; }
td svg { width: 15px; height: 12px; margin-left: 4px; }
.scroll { width: 15px; border-left: 1px solid #b4b4b4; display: flex; flex-direction: column; }
.scroll button { height: 14px; display: grid; place-items: center; }
.thumb { flex: 1; background: linear-gradient(90deg, #fdfdfd, #ededed); border: 1px solid #b4b4b4; border-width: 1px 0; }
.trough { height: 94px; background: #e4e4e4; border-bottom: 1px solid #b4b4b4; }
.right-tabs { display: flex; flex-direction: column; align-items: flex-start; gap: 1px; }
.right-tab { writing-mode: vertical-rl; width: 24px; height: 82px; border: 1px solid #b8b8b8; border-left: 0; border-radius: 0 3px 3px 0; background: #e7e7e7; }
.right-tab.active { width: 28px; height: 86px; margin-left: -1px; background: #fdfdfd; }

/* readouts */
.lower { display: grid; grid-template-columns: 1fr 1fr; gap: 10px; padding: 0 8px 1px 11px; }
.widget { display: flex; flex-direction: column; min-width: 0; }
.readout { flex: 1; height: 252px; overflow: hidden; padding: 11px 11px 0; }
.row { display: grid; grid-template-columns: 129px repeat(3, minmax(0, 1fr)); column-gap: 6px; height: 23px; line-height: 23px; white-space: nowrap; }
.row.controls { height: 25px; margin-bottom: 2px; }
.row.spaced { margin-top: 6px; }
.row p { display: grid; grid-template-columns: 1fr 30px; gap: 6px; }
.row b, .row i { font-weight: normal; font-style: normal; }
.row b { text-align: right; }
.btn { display: flex; align-items: center; justify-content: center; gap: 4px; border: 1px solid #bfbfbf; border-radius: 3px; background: var(--face); color: #8c8c8c; }
.btn svg { color: #fff; }
.btn.primary { border-color: #2f7cb3; background: linear-gradient(#83c9fb, #66b8f0); color: #fff; }
.muted { color: #bebebe; }
.muted .combo { border-color: #c4c4c4; }
.muted .combo::after { border-top-color: #c4c4c4; }

/* status bar */
.status { height: 47px; display: flex; align-items: center; padding: 4px 8px 0 10px; gap: 7px; white-space: nowrap; }
.status time { min-width: 180px; }
.progress { flex: 1; position: relative; height: 26px; border: 1px solid #aaa; border-radius: 3px; background: #fff; text-align: center; line-height: 24px; margin-right: 8px; }
.chunk { position: absolute; inset: 0 auto 0 0; background: linear-gradient(#3da5e8, #2f8cca); border: 1px solid #2877ac; border-radius: 2px; }
.linked { color: #0bb51e; }
```

FILE: markers.js
```js
const satellites = [
  ["G 10",384,254],["G 24",485,256],["G 32",344,294],["G 23",437,296],["G 15",535,308],["G 12",492,351],
  ["G 19",617,319],["G 13",578,328],["G 18",402,375],["G 25",465,381],["G 31",348,405],["G 05",515,400],["G 29",443,467],
  ["",604,436],["G 11",613,438],["G 20",561,444],["G 14",682,255],["G 17",645,281],["G 01",755,267],["G 21",803,247],
  ["G 08",842,306],["G 22",795,321],["G 30",673,340],["G 03",782,350],["G 07",704,383],["G 06",651,397],
  ["G 27",871,342],["G 16",841,422],["G 04",800,443],["G 26",895,455],["G",717,461],
  ["E 19",435,246],["E 27",553,267],["E 12",357,337],["E 21",493,332],["E 07",567,355],["E 01",441,391],
  ["E 33",400,400],["E 14",386,432],["E 31",364,456],["E 26",475,460],["E 13",597,436],["E 08",615,417],
  ["E 18",614,326],["E 30",677,254],["E 36",786,244],["E 11",903,269],["E 04",925,289],["E 02",748,315],
  ["E 15",664,370],["E 25",790,375],["E 09",873,353],["E 05",826,414],["E 24",844,442],["E 03",727,462]
];
const originX = 29, originY = 60;
const icon = ([name, x, y]) =>
  `<use href="#${name.startsWith("E") ? "eu" : "us"}-disc" x="${x - originX - 8}" y="${y - originY - 8}" width="16" height="16"/>`;
const label = ([name, x, y]) => {
  const left = x - originX + 10.5, top = y - originY - 9.5, width = name.startsWith("E") ? 32 : 33;
  return `<rect class="tag" x="${left}" y="${top}" width="${width}" height="19" rx="1"/>` +
    `<text class="tag-text" x="${left + 2}" y="${top + 15}">${name}</text>`;
};
const receiver =
  `<circle class="rx" cx="633" cy="207" r="4"/><rect class="rx" x="638.5" y="196.5" width="77" height="19"/>` +
  `<text class="rx-text" x="640" y="211">Receiver 1</text>`;
document.getElementById("markers").innerHTML =
  satellites.map(icon).join("") + satellites.map(label).join("") + receiver;
```
